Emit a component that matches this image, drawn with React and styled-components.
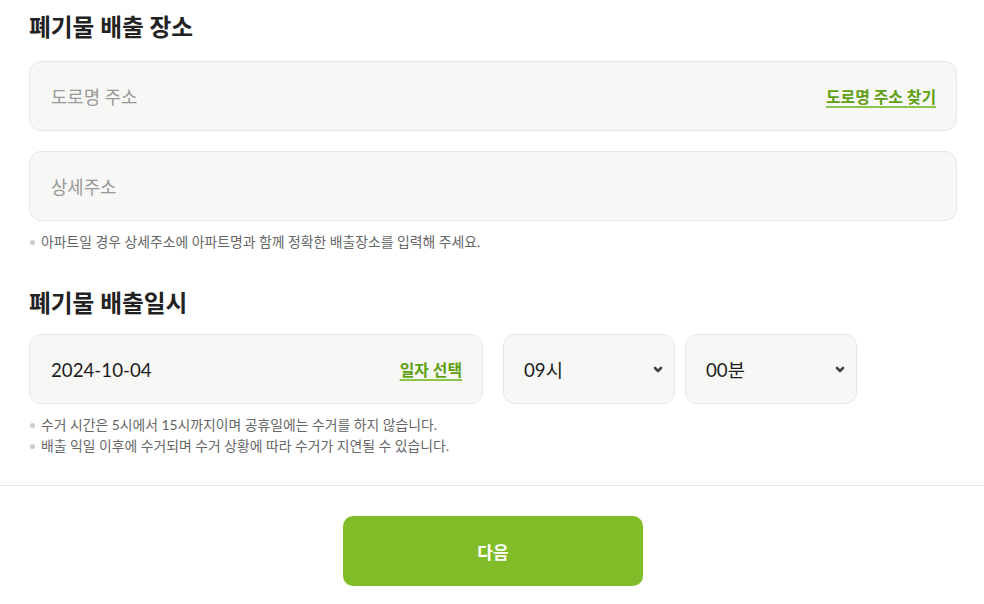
import React from 'react'
import styled, { createGlobalStyle } from 'styled-components'

const GlobalStyle = createGlobalStyle`
  html, body {
    margin: 0;
    padding: 0;
    background: #fff;
  }
  body {
    font-family: Lato, "Noto Sans CJK KR", sans-serif;
    color: #222;
  }
`

const StyledPage = styled.div`
  width: 984px;
`

const StyledSection = styled.div`
  padding: 12px 27px 0 29px;
`

const StyledTitle = styled.h2`
  margin: ${(props) => props.$top || 0}px 0 0 0;
  font-size: 23.7px;
  font-weight: 700;
  line-height: 30px;
  color: #222;
`

const StyledField = styled.div`
  display: flex;
  align-items: center;
  justify-content: space-between;
  box-sizing: border-box;
  width: ${(props) => props.$width || '100%'};
  height: 70px;
  margin-top: ${(props) => props.$top || 0}px;
  padding: 0 20px 0 21px;
  background-color: #f7f7f5;
  border: 1px solid #e6e6e3;
  border-radius: 12px;
`

const StyledPlaceholder = styled.span`
  font-size: 17.8px;
  color: #999;
`

const StyledValue = styled.span`
  font-size: 18.7px;
  line-height: 24px;
  padding-top: 1px;
  color: #1d1d1d;
`

const StyledLink = styled.a`
  font-size: 15.9px;
  font-weight: 700;
  color: #5fa012;
  text-decoration: underline;
  text-underline-offset: 3px;
  text-decoration-thickness: 2px;
  text-decoration-color: #8cc450;
`

const StyledNotes = styled.ul`
  list-style: none;
  margin: 10px 0 0 0;
  padding: 0;
`

const StyledNote = styled.li`
  position: relative;
  padding-left: 12px;
  font-size: 13.85px;
  line-height: 21px;
  color: #666;

  &::before {
    content: '';
    position: absolute;
    left: 1px;
    top: 9px;
    width: 5px;
    height: 5px;
    border-radius: 50%;
    background: #ccc;
  }
`

const StyledRow = styled.div`
  display: flex;
  align-items: center;
  margin-top: 16px;
`

const StyledSelect = styled(StyledField)`
  width: 172px;
  margin-left: ${(props) => props.$left}px;
  padding: 0 10px 0 20px;
`

const StyledDivider = styled.hr`
  margin: 29px 0 0 0;
  border: 0;
  border-top: 1px solid #e6e6e6;
`

const StyledFooter = styled.div`
  display: flex;
  justify-content: center;
  padding: 30px 0 0 2px;
`

const StyledButton = styled.button`
  width: 300px;
  height: 70px;
  border: 0;
  border-radius: 10px;
  background-color: #80bd29;
  color: #fff;
  font-family: Lato, "Noto Sans CJK KR", sans-serif;
  font-size: 17px;
  font-weight: 700;
  cursor: pointer;
`

const Chevron = () => (
  <svg width="12" height="12" viewBox="0 0 12 12">
    <path
      d="M3 5 L6 8 L9 5"
      fill="none"
      stroke="#444"
      strokeWidth="2.6"
      strokeLinecap="round"
      strokeLinejoin="round"
    />
  </svg>
)

const Select = ({ value, left }) => (
  <StyledSelect $left={left}>
    <StyledValue>{value}</StyledValue>
    <Chevron />
  </StyledSelect>
)

const App = () => (
  <StyledPage>
    <GlobalStyle />
    <StyledSection>
      <StyledTitle>폐기물 배출 장소</StyledTitle>
      <StyledField $top={19}>
        <StyledPlaceholder>도로명 주소</StyledPlaceholder>
        <StyledLink href="#address">도로명 주소 찾기</StyledLink>
      </StyledField>
      <StyledField $top={20}>
        <StyledPlaceholder>상세주소</StyledPlaceholder>
      </StyledField>
      <StyledNotes>
        <StyledNote>
          아파트일 경우 상세주소에 아파트명과 함께 정확한 배출장소를 입력해 주세요.
        </StyledNote>
      </StyledNotes>

      <StyledTitle $top={36}>폐기물 배출일시</StyledTitle>
      <StyledRow>
        <StyledField $width="454px">
          <StyledValue>2024-10-04</StyledValue>
          <StyledLink href="#date">일자 선택</StyledLink>
        </StyledField>
        <Select value="09시" left={20} />
        <Select value="00분" left={10} />
      </StyledRow>
      <StyledNotes>
        <StyledNote>수거 시간은 5시에서 15시까지이며 공휴일에는 수거를 하지 않습니다.</StyledNote>
        <StyledNote>배출 익일 이후에 수거되며 수거 상황에 따라 수거가 지연될 수 있습니다.</StyledNote>
      </StyledNotes>
    </StyledSection>
    <StyledDivider />
    <StyledFooter>
      <StyledButton>다음</StyledButton>
    </StyledFooter>
  </StyledPage>
)

export default App
